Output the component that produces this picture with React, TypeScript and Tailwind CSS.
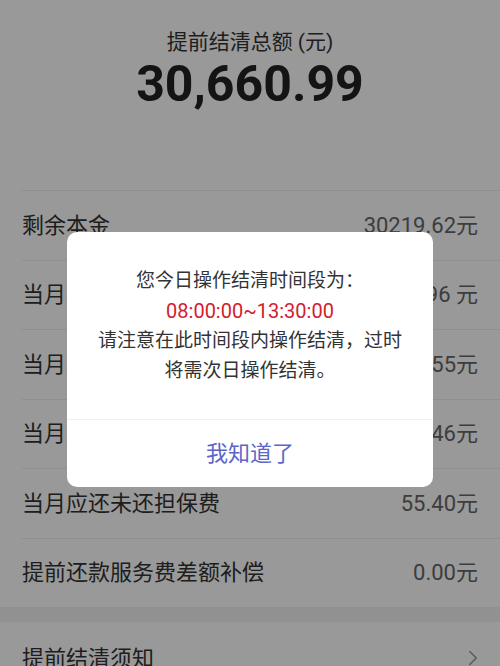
import { ChevronRight } from "lucide-react";

const rows = [
  { label: "剩余本金", value: "30219.62元" },
  { label: "当月应还未还利息", value: "330.96 元" },
  { label: "当月应还未还服务费", value: "55.55元" },
  { label: "当月应还未还罚息", value: "0.46元" },
  { label: "当月应还未还担保费", value: "55.40元" },
  { label: "提前还款服务费差额补偿", value: "0.00元" },
];

const font = {
  fontFamily: 'Roboto, "Noto Sans CJK SC", "Noto Sans", sans-serif',
};

const DetailRow = ({ label, value }: { label: string; value: string }) => {
  return (
    <div className="ml-[22px] flex h-[69.5px] items-center justify-between border-t border-[#eeeeee] pr-[22px]">
      <span className="text-[22px] text-[#333333]">{label}</span>
      <span className="text-[22px] text-[#666666]">{value}</span>
    </div>
  );
};

const TimeNotice = () => {
  return (
    <div className="absolute inset-0 flex items-start justify-center bg-black/40">
      <div className="mt-[232px] w-[366px] overflow-hidden rounded-[10px] bg-white">
        <div className="flex flex-col items-center px-[20px] pb-[33px] pt-[34px] text-center text-[19px] leading-[30px] text-[#333333]">
          <span>您今日操作结清时间段为：</span>
          <span className="text-[20px] text-[#d4202c]">08:00:00~13:30:00</span>
          <span>请注意在此时间段内操作结清，过时</span>
          <span>将需次日操作结清。</span>
        </div>
        <button className="flex h-[68px] w-full items-center justify-center border-t border-[#f0f0f0] text-[22px] text-[#5a66c8]">
          我知道了
        </button>
      </div>
    </div>
  );
};

const App = () => {
  return (
    <div className="relative h-[666px] w-[500px] overflow-hidden bg-white" style={font}>
      <div className="flex h-[190px] flex-col items-center pt-[26px]">
        <span className="text-[21px] leading-[32px] text-[#333333]">提前结清总额 (元)</span>
        <span className="mt-[-2px] text-[50px] font-bold leading-[56px] text-[#222222]">
          30,660.99
        </span>
      </div>

      <div className="flex flex-col">
        {rows.map((row) => (
          <DetailRow key={row.label} {...row} />
        ))}
      </div>

      <div className="h-[15px] bg-[#f2f2f2]" />

      <div className="flex h-[72px] items-center justify-between pl-[22px] pr-[14px]">
        <span className="text-[22px] text-[#333333]">提前结清须知</span>
        <ChevronRight className="h-[26px] w-[26px] text-[#999999]" strokeWidth={1.5} />
      </div>

      <TimeNotice />
    </div>
  );
};

export default App;
